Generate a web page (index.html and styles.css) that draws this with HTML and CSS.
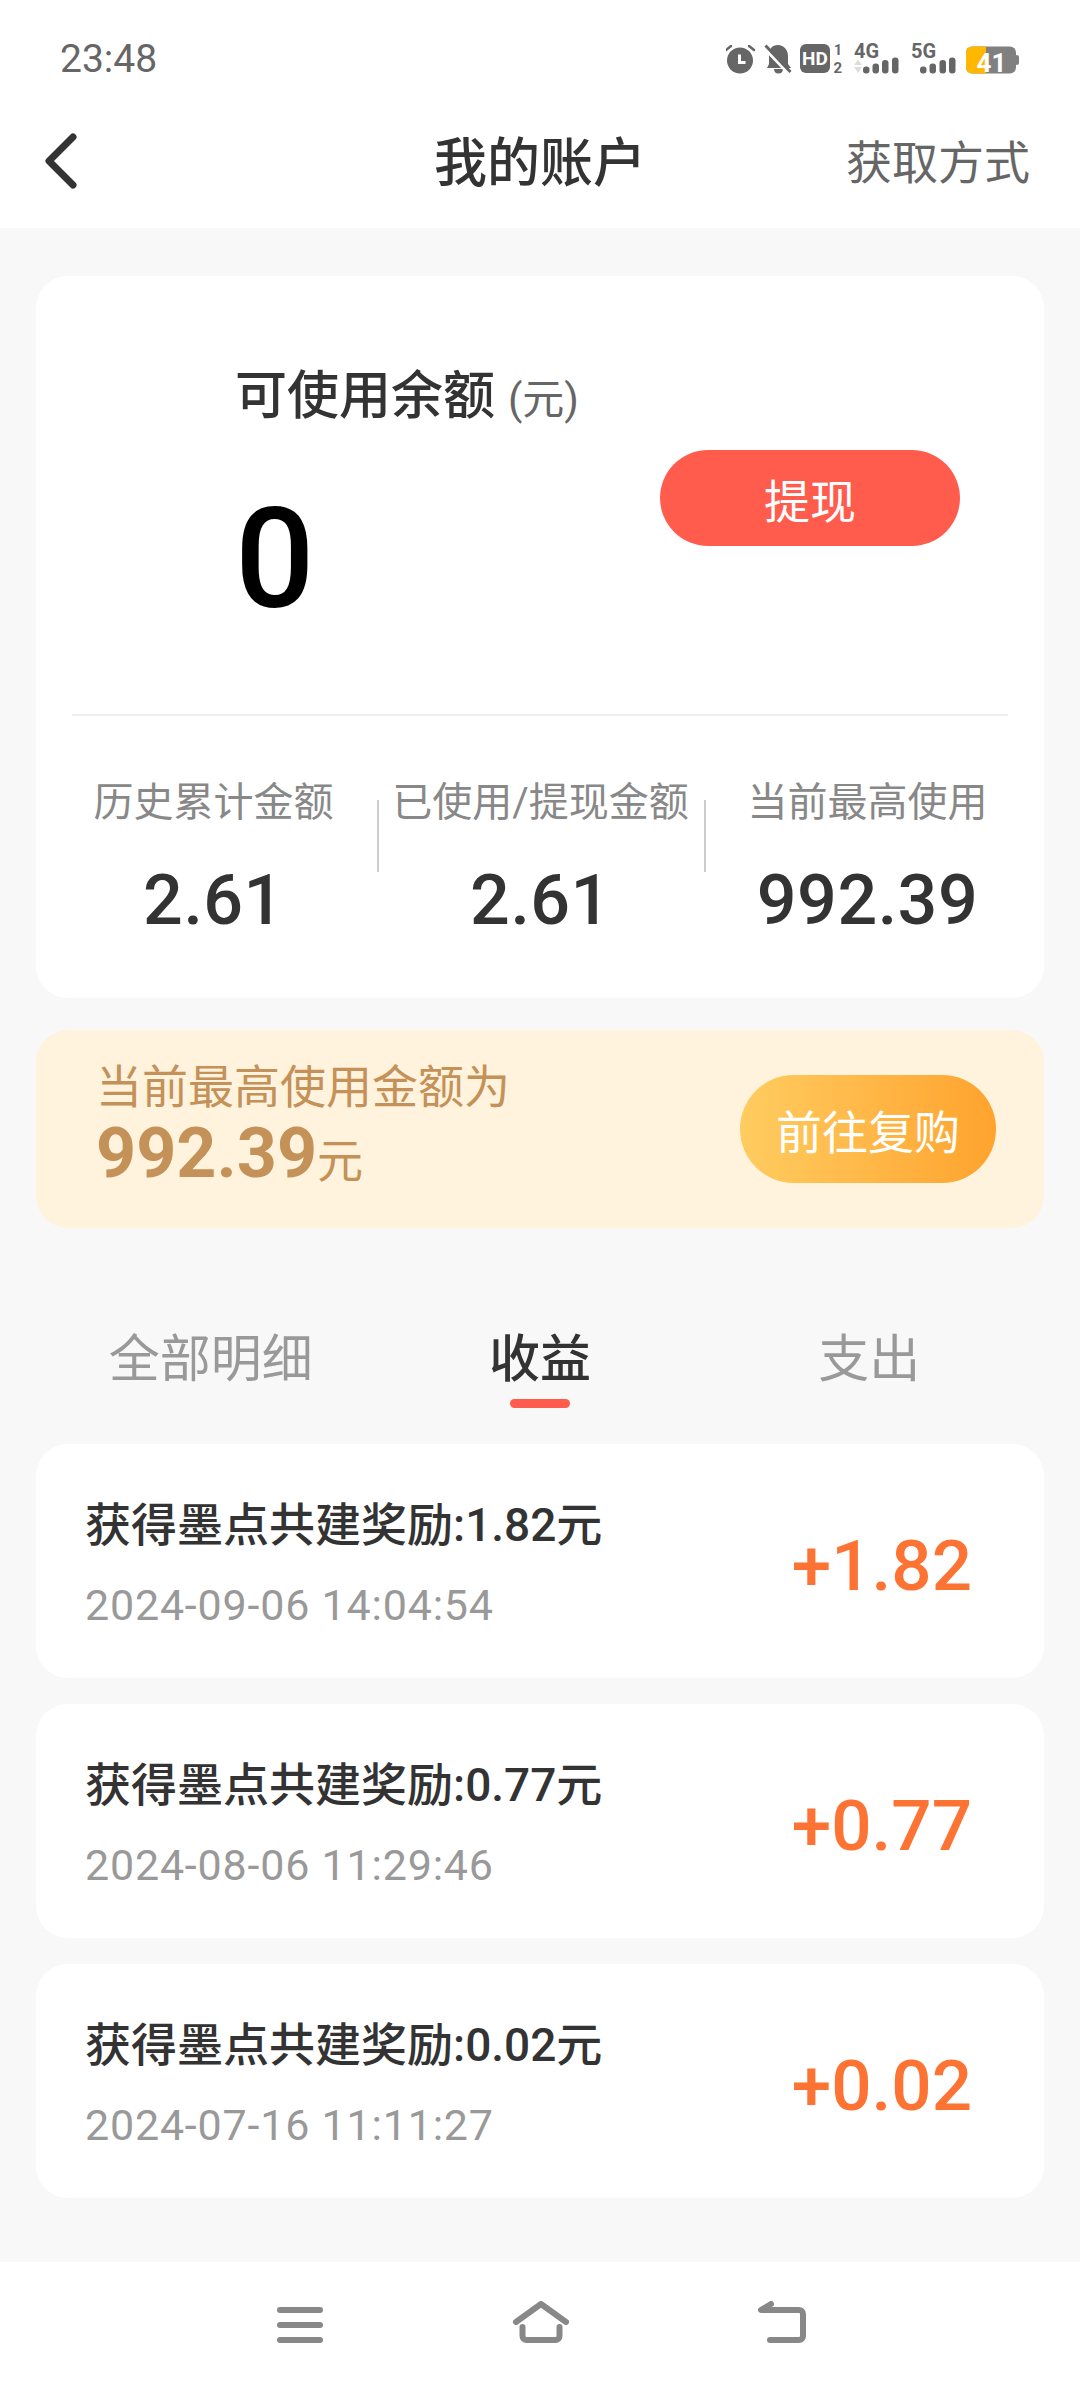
FILE: index.html
```html
<!DOCTYPE html>
<html>
<head>
    <title>我的账户</title>
    <link rel="stylesheet" href="styles.css">
</head>
<body>
    <div class="top">
        <div class="status-bar">
            <span class="time">23:48</span>
            <div class="status-icons">
                <svg width="294" height="50" viewBox="0 -10 294 50">
                    <!-- alarm -->
                    <circle cx="14" cy="16.500" r="13" fill="#666"/>
                    <path d="M0 6l5-4M28 6l-5-4" fill="none" stroke="#666" stroke-width="2.500" stroke-linecap="round"/>
                    <path d="M13.500 10.500v8h6" fill="none" stroke="#fff" stroke-width="3"/>
                    <!-- muted bell -->
                    <path d="M52 1c6 0 10 5 10 11v8l3 4H41l2-4v-9c0-6 3-10 9-10zM48 25h9c0 3-2 4.500-4.500 4.500S48 28 48 25z" fill="#666"/>
                    <path d="M37 3l26 27" stroke="#fff" stroke-width="3"/>
                    <path d="M39.500 1.500l25 26.500" stroke="#666" stroke-width="3"/>
                    <!-- hd -->
                    <rect x="74" y="0" width="30" height="29" rx="6" fill="#666"/>
                    <text class="bar-text" x="76" y="21" font-size="19" fill="#fff">HD</text>
                    <text class="bar-text" x="108" y="11" font-size="14" fill="#666">1</text>
                    <text class="bar-text" x="107.500" y="29" font-size="15" fill="#666">2</text>
                    <!-- 4g -->
                    <text class="bar-text" x="128" y="14" font-size="20" fill="#666">4G</text>
                    <path d="M128 21l4-5.500 4 5.500zM128 23l4 6 4-6z" fill="#ddd"/>
                    <g fill="#666">
                        <rect x="137" y="22.500" width="6.500" height="7" rx="3"/>
                        <rect x="146.500" y="19.500" width="6.500" height="10" rx="3"/>
                        <rect x="156" y="16" width="6.500" height="13.500" rx="3"/>
                        <rect x="166" y="13.500" width="6.500" height="16" rx="3"/>
                    </g>
                    <!-- 5g -->
                    <text class="bar-text" x="185" y="14" font-size="20" fill="#666">5G</text>
                    <g fill="#666">
                        <rect x="194" y="22.500" width="6.500" height="7" rx="3"/>
                        <rect x="203.500" y="19.500" width="6.500" height="10" rx="3"/>
                        <rect x="213.500" y="16" width="6.500" height="13.500" rx="3"/>
                        <rect x="223" y="13.500" width="6.500" height="16" rx="3"/>
                    </g>
                    <!-- battery -->
                    <rect x="240" y="2.500" width="50" height="27" rx="6" fill="#808080"/>
                    <path d="M246 2.500h14v27h-14a6 6 0 0 1-6-6v-15a6 6 0 0 1 6-6z" fill="#ffb700"/>
                    <rect x="289" y="11" width="4" height="10" rx="2" fill="#808080"/>
                    <text class="bar-text" x="250.500" y="27.500" font-size="26" fill="#fff">41</text>
                </svg>
            </div>
        </div>
        <div class="nav-bar">
            <svg class="back" width="36" height="56" viewBox="0 0 36 56">
                <path d="M31 4L7 28l24 24" fill="none" stroke="#333" stroke-width="7" stroke-linecap="round" stroke-linejoin="round"/>
            </svg>
            <h1 class="title">我的账户</h1>
            <a class="nav-link">获取方式</a>
        </div>
    </div>

    <div class="content">
        <section class="balance-card">
            <div class="balance-main">
                <div class="balance-left">
                    <div class="balance-label">可使用余额 <span class="unit">(元)</span></div>
                    <div class="balance-num">0</div>
                </div>
                <button class="withdraw">提现</button>
            </div>
            <div class="stats">
                <div class="stat">
                    <div class="stat-label">历史累计金额</div>
                    <div class="stat-num">2.61</div>
                </div>
                <div class="stat">
                    <div class="stat-label">已使用/提现金额</div>
                    <div class="stat-num">2.61</div>
                </div>
                <div class="stat">
                    <div class="stat-label">当前最高使用</div>
                    <div class="stat-num">992.39</div>
                </div>
            </div>
        </section>

        <section class="banner">
            <div>
                <div class="banner-label">当前最高使用金额为</div>
                <div class="banner-amount"><b>992.39</b>元</div>
            </div>
            <button class="rebuy">前往复购</button>
        </section>

        <div class="tabs">
            <div class="tab">全部明细</div>
            <div class="tab active">收益</div>
            <div class="tab">支出</div>
        </div>

        <div class="record">
            <div class="record-text">
                <div class="record-title">获得墨点共建奖励:1.82元</div>
                <div class="record-date">2024-09-06 14:04:54</div>
            </div>
            <div class="record-amount">+1.82</div>
        </div>
        <div class="record">
            <div class="record-text">
                <div class="record-title">获得墨点共建奖励:0.77元</div>
                <div class="record-date">2024-08-06 11:29:46</div>
            </div>
            <div class="record-amount">+0.77</div>
        </div>
        <div class="record">
            <div class="record-text">
                <div class="record-title">获得墨点共建奖励:0.02元</div>
                <div class="record-date">2024-07-16 11:11:27</div>
            </div>
            <div class="record-amount">+0.02</div>
        </div>
    </div>

    <div class="bottom-nav">
        <svg width="46" height="48" viewBox="0 0 46 48">
            <path d="M3 9h40M3 24h40M3 39h40" fill="none" stroke="#888" stroke-width="6" stroke-linecap="round"/>
        </svg>
        <svg width="58" height="48" viewBox="0 0 58 48">
            <path d="M4 21L29 3l25 18" fill="none" stroke="#888" stroke-width="6" stroke-linecap="round" stroke-linejoin="round"/>
            <path d="M10.500 26v9a4 4 0 0 0 4 4h29a4 4 0 0 0 4-4v-9" fill="none" stroke="#888" stroke-width="6" stroke-linecap="round"/>
        </svg>
        <svg width="48" height="48" viewBox="0 0 48 48">
            <path d="M13 3L3 9h38a4 4 0 0 1 4 4v22a4 4 0 0 1-4 4H12" fill="none" stroke="#888" stroke-width="6" stroke-linecap="round" stroke-linejoin="round"/>
        </svg>
    </div>
</body>
</html>
```
FILE: styles.css
```css
* {
    box-sizing: border-box;
}

body {
    margin: 0;
    width: 1080px;
    height: 2388px;
    display: flex;
    flex-direction: column;
    background: #f8f8f8;
    font-family: Roboto, "Noto Sans CJK SC", sans-serif;
    color: #333;
}

button {
    border: none;
    font-family: inherit;
    color: #fff;
}

/* Header */
.top {
    height: 228px;
    background: #fff;
}

.status-bar {
    height: 118px;
    padding: 0 60px;
    display: flex;
    justify-content: space-between;
    align-items: center;
}

.time {
    font-size: 39px;
    color: #666;
}

.status-icons {
    display: flex;
}

.bar-text {
    font-weight: 700;
}

.nav-bar {
    height: 86px;
    padding: 0 50px 0 42px;
    display: flex;
    justify-content: space-between;
    align-items: center;
    position: relative;
}

.title {
    margin: 0;
    padding-bottom: 4px;
    position: absolute;
    left: 0;
    right: 0;
    text-align: center;
    font-size: 53px;
    font-weight: 500;
}

.nav-link {
    padding-bottom: 4px;
    font-size: 46px;
    color: #666;
}

/* Main content */
.content {
    flex: 1;
    padding: 48px 36px 0;
}

.balance-card {
    height: 722px;
    padding: 0 36px;
    background: #fff;
    border-radius: 32px;
}

.balance-main {
    height: 440px;
    padding: 84px 48px 0 163px;
    display: flex;
    justify-content: space-between;
    border-bottom: 2px solid #eee;
}

.balance-label {
    font-size: 52px;
    font-weight: 500;
    line-height: 74px;
}

.unit {
    font-size: 42px;
    font-weight: 400;
    color: #666;
}

.balance-num {
    margin-top: 47px;
    font-size: 140px;
    line-height: 150px;
    font-weight: 500;
    color: #000;
}

.withdraw {
    width: 300px;
    height: 96px;
    margin-top: 90px;
    border-radius: 48px;
    background: #ff5c4d;
    font-size: 46px;
}

.stats {
    display: grid;
    grid-template-columns: repeat(3, 327px);
    margin: 0 -22px;
}

.stat {
    height: 170px;
    margin-top: 48px;
    text-align: center;
    position: relative;
}

.stat + .stat:before {
    content: "";
    position: absolute;
    left: 0;
    top: 36px;
    height: 72px;
    width: 2px;
    background: #ccc;
}

.stat-label {
    margin-top: 14px;
    font-size: 40px;
    line-height: 50px;
    color: #888;
    white-space: nowrap;
}

.stat-num {
    margin-top: 32px;
    font-size: 70px;
    line-height: 80px;
    font-weight: 500;
    letter-spacing: 0.5px;
}

/* Repurchase banner */
.banner {
    height: 198px;
    margin-top: 32px;
    padding: 0 48px 0 60px;
    display: flex;
    justify-content: space-between;
    align-items: center;
    background: #fff3dd;
    border-radius: 32px;
    color: #c49158;
}

.banner-label {
    font-size: 46px;
    line-height: 56px;
}

.banner-amount {
    font-size: 46px;
    line-height: 76px;
}

.banner-amount b {
    font-size: 70px;
}

.rebuy {
    width: 256px;
    height: 108px;
    border-radius: 54px;
    background: linear-gradient(90deg, #ffcc60, #ffa32e);
    font-size: 46px;
}

/* Tabs */
.tabs {
    height: 216px;
    padding: 97px 10px 0;
    display: grid;
    grid-template-columns: repeat(3, 1fr);
    align-items: start;
    text-align: center;
}

.tab {
    font-size: 51px;
    line-height: 70px;
    color: #999;
    position: relative;
}

.tab.active {
    color: #333;
    font-weight: 500;
}

.tab.active:after {
    content: "";
    position: absolute;
    left: 50%;
    bottom: -13px;
    width: 60px;
    height: 9px;
    margin-left: -30px;
    border-radius: 5px;
    background: #ff5c4d;
}

/* Records */
.record {
    height: 234px;
    margin-bottom: 26px;
    padding: 0 72px 0 49px;
    display: flex;
    justify-content: space-between;
    align-items: center;
    background: #fff;
    border-radius: 32px;
}

.record-text {
    padding-top: 3px;
}

.record-title {
    font-size: 46px;
    line-height: 60px;
    font-weight: 500;
}

.record-date {
    margin-top: 25px;
    font-size: 43px;
    line-height: 50px;
    letter-spacing: 0.8px;
    color: #999;
}

.record-amount {
    padding-top: 8px;
    font-size: 71px;
    font-weight: 500;
    color: #fd7333;
}

/* System navigation */
.bottom-nav {
    height: 126px;
    padding: 0 274px 0 277px;
    display: flex;
    justify-content: space-between;
    align-items: center;
    background: #fff;
}
```
